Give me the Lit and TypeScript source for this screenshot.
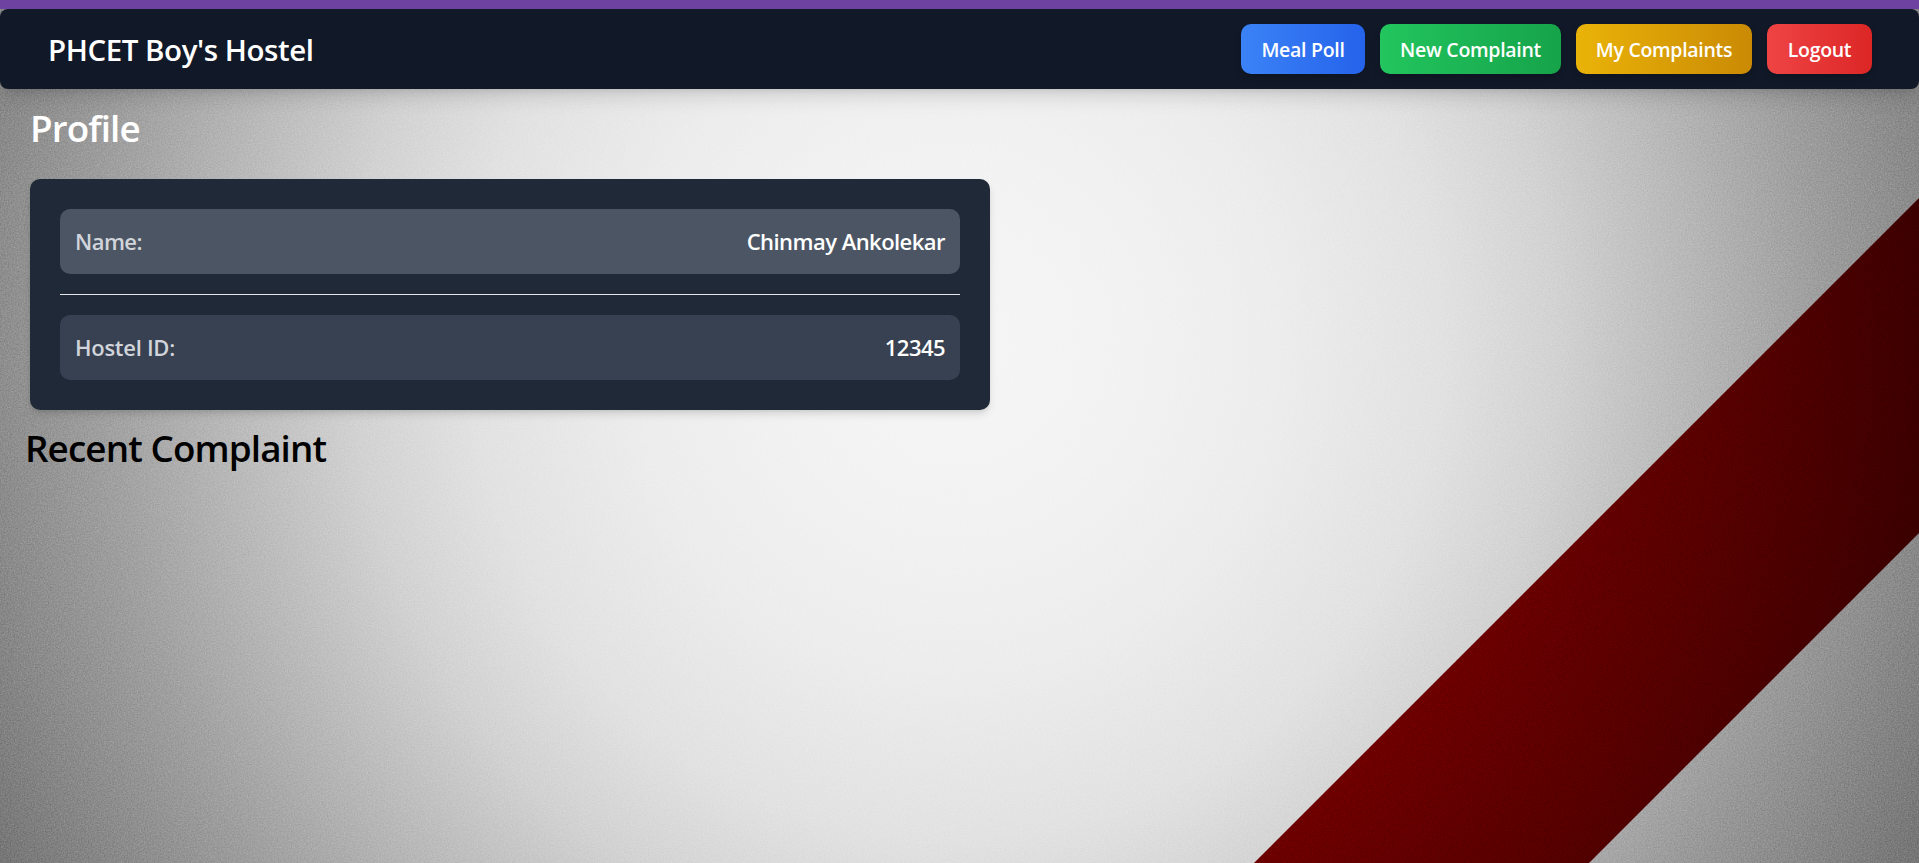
import { LitElement, html, css } from "lit";
import { customElement } from "lit/decorators.js";

@customElement("app-root")
export class AppRoot extends LitElement {
  static styles = css`
    :host { display: block; position: relative; height: 863px; overflow: hidden; isolation: isolate;
      font-family: "Segoe UI", "Open Sans", "Noto Sans", sans-serif; font-weight: 600; }
    * { box-sizing: border-box; }
    .backdrop { position: absolute; inset: 0; width: 100%; height: 100%; z-index: -1; }
    .grain { mix-blend-mode: overlay; }
    .strip { height: 9px; background: #6e42a1; }
    nav { height: 80px; background: #111827; border-radius: 8px; padding: 0 47px 0 48px;
      display: flex; align-items: center; justify-content: space-between;
      box-shadow: 0 12px 19px -4px rgb(0 0 0 / .12), 0 5px 8px -5px rgb(0 0 0 / .12); }
    .brand { color: #fff; font-size: 29.5px; letter-spacing: -.45px; white-space: nowrap; }
    .actions { display: flex; gap: 15px; }
    button { height: 50px; border: 0; padding: 0; border-radius: 10px; color: #fff; font: inherit; font-size: 19.5px;
      letter-spacing: -.3px; white-space: nowrap;
      box-shadow: 0 5px 8px -1px rgb(0 0 0 / .1), 0 2px 5px -2px rgb(0 0 0 / .1); }
    .meal { width: 124px; background: linear-gradient(to right, #3b82f6, #2563eb); }
    .new { width: 181px; background: linear-gradient(to right, #22c55e, #16a34a); }
    .mine { width: 176px; background: linear-gradient(to right, #eab308, #ca8a04); }
    .out { width: 105px; background: linear-gradient(to right, #ef4444, #dc2626); }
    main { padding: 14px 30px 0; }
    h1, h2 { margin: 0; font-size: 36.8px; line-height: 50px; font-weight: 600; white-space: nowrap; }
    h1 { color: #fff; letter-spacing: -.9px; }
    h2 { color: #000; margin: 13px 0 0 -5px; letter-spacing: -.88px; }
    .card { width: 960px; height: 231px; margin-top: 26px; padding: 30px; border-radius: 10px; background: #1f2937;
      box-shadow: 0 5px 8px -1px rgb(0 0 0 / .12), 0 2px 5px -2px rgb(0 0 0 / .1); }
    .row { height: 65px; padding: 0 15px 2px; border-radius: 10px; display: flex; align-items: center;
      justify-content: space-between; font-size: 22px; letter-spacing: -.54px; }
    .name { background: #4b5563; }
    .id { background: #374151; }
    .label { color: #d1d5db; }
    .id .label { letter-spacing: -.28px; }
    .value { color: #fff; }
    hr { height: 1px; border: 0; margin: 20px 0; background: #e5e7eb; }
  `;

  render() {
    return html`
      <svg class="backdrop" viewBox="0 0 1919 863" preserveAspectRatio="none" aria-hidden="true">
        <defs>
          <radialGradient id="light" gradientUnits="userSpaceOnUse" cx="0" cy="0" r="1"
            gradientTransform="translate(955 340) scale(1080 1110)">
            <stop offset="0" stop-color="#f6f6f6" />
            <stop offset=".15" stop-color="#f3f3f3" />
            <stop offset=".3" stop-color="#ededed" />
            <stop offset=".45" stop-color="#e2e2e2" />
            <stop offset=".56" stop-color="#d2d2d2" />
            <stop offset=".7" stop-color="#b4b4b4" />
            <stop offset=".8" stop-color="#9e9e9e" />
            <stop offset=".9" stop-color="#8a8a8a" />
            <stop offset="1" stop-color="#767676" />
          </radialGradient>
          <radialGradient id="redlight" gradientUnits="userSpaceOnUse" cx="0" cy="0" r="1"
            gradientTransform="translate(955 340) scale(1080 1110)">
            <stop offset=".5" stop-color="#720000" />
            <stop offset=".75" stop-color="#520000" />
            <stop offset=".95" stop-color="#340000" />
          </radialGradient>
          <filter id="noise" x="0" y="0" width="100%" height="100%" color-interpolation-filters="sRGB">
            <feTurbulence type="fractalNoise" baseFrequency=".7" numOctaves="2" seed="4" />
            <feColorMatrix values=".2 0 0 0 .4  .2 0 0 0 .4  .2 0 0 0 .4  0 0 0 0 1" />
          </filter>
        </defs>
        <rect width="1919" height="863" fill="url(#light)" />
        <polygon points="1919,198 1254,863 1589,863 1919,533" fill="url(#redlight)" />
        <rect class="grain" width="1919" height="863" filter="url(#noise)" />
      </svg>
      <div class="strip"></div>
      <nav>
        <div class="brand">PHCET Boy's Hostel</div>
        <div class="actions">
          <button class="meal">Meal Poll</button>
          <button class="new">New Complaint</button>
          <button class="mine">My Complaints</button>
          <button class="out">Logout</button>
        </div>
      </nav>
      <main>
        <h1>Profile</h1>
        <section class="card">
          <div class="row name"><span class="label">Name:</span><span class="value">Chinmay Ankolekar</span></div>
          <hr />
          <div class="row id"><span class="label">Hostel ID:</span><span class="value">12345</span></div>
        </section>
        <h2>Recent Complaint</h2>
      </main>
    `;
  }
}
